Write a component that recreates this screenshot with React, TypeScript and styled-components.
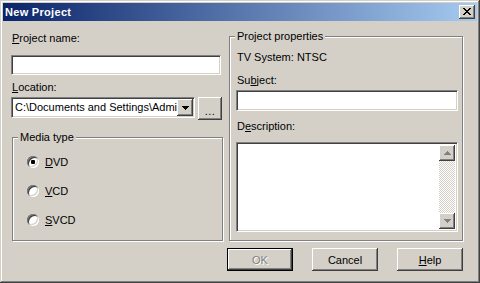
import styled, { createGlobalStyle, css } from "styled-components";

const FACE = "#D4D0C8";

const GlobalStyle = createGlobalStyle`
  html, body {
    margin: 0;
    padding: 0;
    background: ${FACE};
  }
  body {
    font-family: "Liberation Sans", Arial, sans-serif;
    font-size: 11px;
    color: #000;
  }
`;

const raised = css`
  background: ${FACE};
  box-shadow: inset -1px -1px #404040, inset 1px 1px #fff,
    inset -2px -2px #808080, inset 2px 2px ${FACE};
`;

const sunken = css`
  background: #fff;
  box-sizing: border-box;
  border: 1px solid;
  border-color: #808080 #fff #fff #808080;
  box-shadow: inset 1px 1px #404040, inset -1px -1px ${FACE};
`;

const Window = styled.div`
  width: 480px;
  height: 283px;
  box-sizing: border-box;
  padding: 3px;
  display: flex;
  flex-direction: column;
  background: ${FACE};
  box-shadow: inset -1px -1px #404040, inset 1px 1px ${FACE},
    inset -2px -2px #808080, inset 2px 2px #fff;
`;

const TitleBar = styled.div`
  height: 18px;
  display: flex;
  align-items: center;
  justify-content: space-between;
  padding: 0 2px;
  background: linear-gradient(to right, #0a246a, #a6caf0);
`;

const TitleText = styled.span`
  color: #fff;
  font-weight: bold;
  font-size: 11px;
  letter-spacing: 0.3px;
`;

const CloseButton = styled.div`
  ${raised};
  width: 16px;
  height: 14px;
  display: flex;
  align-items: center;
  justify-content: center;
  svg {
    margin-top: -1px;
  }
`;

const Body = styled.div`
  padding: 9px 14px 0 8px;
  display: flex;
  flex-direction: column;
`;

const Columns = styled.div`
  display: grid;
  grid-template-columns: 212px 234px;
  column-gap: 6px;
`;

const LeftColumn = styled.div`
  display: flex;
  flex-direction: column;
`;

const Label = styled.div<{ $mt?: number }>`
  height: 13px;
  line-height: 13px;
  padding-left: 1px;
  margin-top: ${(p) => p.$mt ?? 0}px;
  white-space: nowrap;
`;

const U = styled.span`
  text-decoration: underline;
`;

const TextInput = styled.input<{ $h: number; $w?: number; $mt?: number }>`
  ${sunken};
  display: block;
  height: ${(p) => p.$h}px;
  width: ${(p) => (p.$w ? `${p.$w}px` : "100%")};
  margin: ${(p) => p.$mt ?? 0}px 0 0 0;
  padding: 0 3px;
  font: inherit;
  outline: none;
`;

const ComboRow = styled.div`
  display: flex;
  align-items: flex-start;
  gap: 3px;
  margin-top: 3px;
  height: 22px;
`;

const Combo = styled.div`
  ${sunken};
  width: 184px;
  height: 21px;
  display: flex;
  align-items: stretch;
  padding: 1px;
`;

const ComboText = styled.div`
  flex: 1;
  min-width: 0;
  white-space: nowrap;
  line-height: 17px;
  padding-left: 2px;
`;

const DropButton = styled.div`
  ${raised};
  width: 16px;
  display: flex;
  align-items: center;
  justify-content: center;
`;

const BrowseButton = styled.div`
  ${raised};
  width: 24px;
  height: 23px;
  display: flex;
  align-items: flex-end;
  justify-content: center;
  padding-bottom: 5px;
  box-sizing: border-box;
  line-height: 8px;
  letter-spacing: 0.5px;
`;

const Group = styled.fieldset<{ $ml?: number; $mt?: number }>`
  margin: ${(p) => p.$mt ?? 0}px 0 0 ${(p) => p.$ml ?? 0}px;
  padding: 0;
  min-width: 0;
  flex: 1;
  border: 1px solid #808080;
  box-shadow: inset 1px 1px #fff, 1px 1px 0 #fff;
`;

const Legend = styled.legend`
  margin-left: 5px;
  padding: 0 2px;
  line-height: 13px;
  height: 13px;
  background: ${FACE};
`;

const RadioList = styled.div`
  display: flex;
  flex-direction: column;
  gap: 16px;
  padding: 11px 0 0 14px;
`;

const RadioRow = styled.div`
  display: flex;
  align-items: center;
  height: 13px;
  gap: 6px;
`;

const RadioDot = styled.span<{ $checked?: boolean }>`
  position: relative;
  width: 12px;
  height: 12px;
  border-radius: 50%;
  background: #fff;
  box-shadow: inset 1px 1px #808080, inset -1px -1px #fff,
    inset 2px 2px #404040, inset -2px -2px ${FACE};
  ${(p) =>
    p.$checked &&
    css`
      &::after {
        content: "";
        position: absolute;
        left: 4px;
        top: 4px;
        width: 4px;
        height: 4px;
        border-radius: 1px;
        background: #000;
      }
    `}
`;

const Properties = styled.div`
  display: flex;
  flex-direction: column;
  padding: 8px 4px 8px 6px;
`;

const Memo = styled.div`
  ${sunken};
  height: 90px;
  margin-top: 9px;
  padding: 2px;
  display: flex;
`;

const MemoText = styled.div`
  flex: 1;
`;

const ScrollBar = styled.div`
  width: 16px;
  display: flex;
  flex-direction: column;
`;

const ScrollButton = styled.div`
  ${raised};
  height: 16px;
  display: flex;
  align-items: center;
  justify-content: center;
`;

const ScrollTrack = styled.div`
  flex: 1;
  background: repeating-conic-gradient(#fff 0 25%, ${FACE} 0 50%) 0 0 / 2px 2px;
`;

const ButtonRow = styled.div`
  display: flex;
  justify-content: flex-end;
  gap: 19px;
  margin-top: 7px;
`;

const Button = styled.button<{ $default?: boolean }>`
  ${raised};
  width: 66px;
  height: 23px;
  margin: 0;
  padding: 0;
  border: none;
  font: 11px "Liberation Sans", Arial, sans-serif;
  color: #000;
  ${(p) =>
    p.$default &&
    css`
      box-shadow: inset 0 0 0 1px #000, inset -2px -2px #404040,
        inset 2px 2px #fff, inset -3px -3px #808080;
    `}
  &:disabled {
    color: #808080;
    text-shadow: 1px 1px #fff;
  }
`;

const CloseGlyph = () => (
  <svg width="8" height="7" viewBox="0 0 8 7" shapeRendering="crispEdges">
    <path
      d="M0 0h2v1H0zM6 0h2v1H6zM1 1h2v1H1zM5 1h2v1H5zM2 2h4v1H2zM3 3h2v1H3zM2 4h4v1H2zM1 5h2v1H1zM5 5h2v1H5zM0 6h2v1H0zM6 6h2v1H6z"
      fill="#000"
    />
  </svg>
);

const Triangle = ({ up, color }: { up?: boolean; color: string }) => (
  <svg width="7" height="4" viewBox="0 0 7 4" shapeRendering="crispEdges">
    <path
      d={up ? "M3 0h1v1H3zM2 1h3v1H2zM1 2h5v1H1zM0 3h7v1H0z" : "M0 0h7v1H0zM1 1h5v1H1zM2 2h3v1H2zM3 3h1v1H3z"}
      fill={color}
    />
  </svg>
);

export default function App() {
  return (
    <>
      <GlobalStyle />
      <Window>
        <TitleBar>
          <TitleText>New Project</TitleText>
          <CloseButton>
            <CloseGlyph />
          </CloseButton>
        </TitleBar>
        <Body>
          <Columns>
            <LeftColumn>
              <Label $mt={2}>
                <U>P</U>roject name:
              </Label>
              <TextInput $h={20} $w={210} $mt={10} readOnly />
              <Label $mt={6}>
                <U>L</U>ocation:
              </Label>
              <ComboRow>
                <Combo>
                  <ComboText>C:\Documents and Settings\Admi</ComboText>
                  <DropButton>
                    <Triangle color="#000" />
                  </DropButton>
                </Combo>
                <BrowseButton>...</BrowseButton>
              </ComboRow>
              <Group $ml={1} $mt={12}>
                <Legend>Media type</Legend>
                <RadioList>
                  <RadioRow>
                    <RadioDot $checked />
                    <span>
                      <U>D</U>VD
                    </span>
                  </RadioRow>
                  <RadioRow>
                    <RadioDot />
                    <span>
                      <U>V</U>CD
                    </span>
                  </RadioRow>
                  <RadioRow>
                    <RadioDot />
                    <span>
                      <U>S</U>VCD
                    </span>
                  </RadioRow>
                </RadioList>
              </Group>
            </LeftColumn>
            <Group>
              <Legend>Project properties</Legend>
              <Properties>
                <Label>TV System: NTSC</Label>
                <Label $mt={10}>
                  Su<U>b</U>ject:
                </Label>
                <TextInput $h={21} $mt={3} readOnly />
                <Label $mt={9}>
                  D<U>e</U>scription:
                </Label>
                <Memo>
                  <MemoText />
                  <ScrollBar>
                    <ScrollButton>
                      <Triangle up color="#808080" />
                    </ScrollButton>
                    <ScrollTrack />
                    <ScrollButton>
                      <Triangle color="#808080" />
                    </ScrollButton>
                  </ScrollBar>
                </Memo>
              </Properties>
            </Group>
          </Columns>
          <ButtonRow>
            <Button $default disabled>
              OK
            </Button>
            <Button>Cancel</Button>
            <Button>
              <U>H</U>elp
            </Button>
          </ButtonRow>
        </Body>
      </Window>
    </>
  );
}
